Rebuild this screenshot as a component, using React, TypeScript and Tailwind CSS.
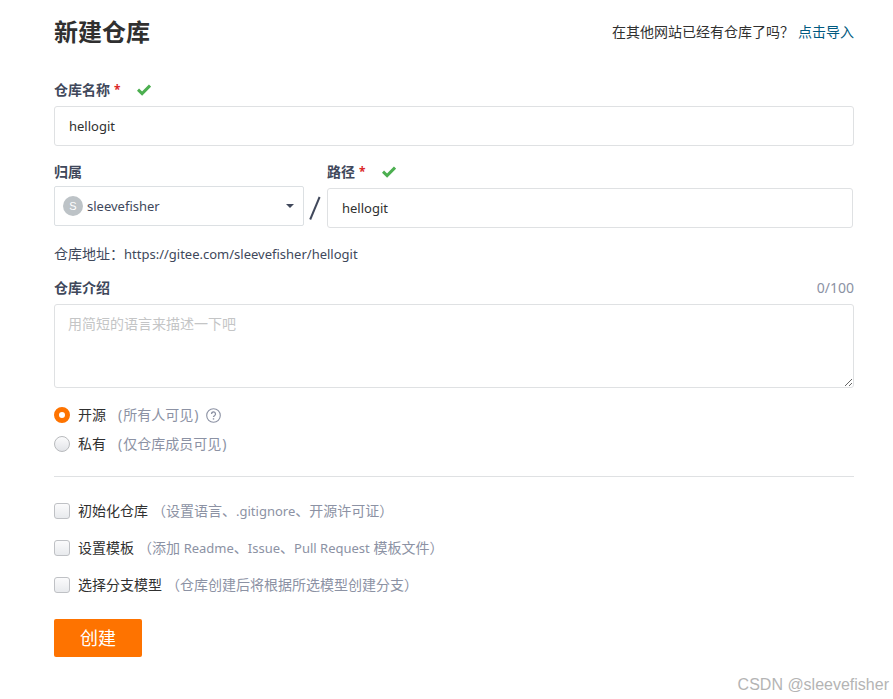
import React, { useState } from "react";

const Latin = ({ children }: { children: React.ReactNode }) => (
    <span className="text-[13px]">{children}</span>
);

const options = [
    { id: "init", title: "初始化仓库", hint: <>（设置语言、<Latin>.gitignore</Latin>、开源许可证）</> },
    { id: "template", title: "设置模板", hint: <>（添加 <Latin>Readme</Latin>、<Latin>Issue</Latin>、<Latin>Pull Request</Latin> 模板文件）</> },
    { id: "branch", title: "选择分支模型", hint: <>（仓库创建后将根据所选模型创建分支）</> },
];

const visibilities = [
    { id: "public", title: "开源", hint: "所有人可见", help: true },
    { id: "private", title: "私有", hint: "仅仓库成员可见", help: false },
];

const CheckMark = () => (
    <svg className="ml-4 h-3 w-[14px]" viewBox="0 0 14 12" aria-hidden="true">
        <path d="M1 5.6 5.1 9.6 13 1.6" fill="none" stroke="#4caf50" strokeWidth="3" />
    </svg>
);

const HelpIcon = () => (
    <svg className="ml-2 size-[15px]" viewBox="0 0 15 15" fill="none" stroke="#8c92a4" aria-hidden="true">
        <circle cx="7.5" cy="7.5" r="6.8" strokeWidth="1.1" />
        <path d="M5.5 6a2 2 0 1 1 3 1.7c-.7.4-1 .7-1 1.3" strokeWidth="1.3" />
        <path d="M7.5 10.2v1.4" strokeWidth="1.4" />
    </svg>
);

const Required = () => <span className="ml-1 text-xs leading-5 text-[#db2828]">*</span>;

const App = () => {
    const [name, setName] = useState("hellogit");
    const [path, setPath] = useState("hellogit");
    const [intro, setIntro] = useState("");
    const [visibility, setVisibility] = useState("public");

    return (
        <div className="relative min-h-screen bg-white pt-4 pr-[39px] pb-[42px] pl-[54px] font-['Noto_Sans','Noto_Sans_CJK_SC',sans-serif] text-sm leading-5 text-[#40485b]">
            <header className="flex items-center justify-between leading-8">
                <h1 className="text-2xl leading-8 font-bold text-[#303030]">新建仓库</h1>
                <p className="text-[#303030]">
                    在其他网站已经有仓库了吗？
                    <a href="#import" className="ml-1 text-[#005980]">点击导入</a>
                </p>
            </header>

            <form onSubmit={(e) => e.preventDefault()}>
                <div className="mt-8">
                    <label htmlFor="name" className="mb-1.5 flex items-center font-bold">
                        仓库名称<Required /><CheckMark />
                    </label>
                    <input
                        type="text"
                        id="name"
                        value={name}
                        onChange={(e) => setName(e.target.value)}
                        className="block h-10 w-full rounded-[3px] border border-[#dfe1e3] px-[14px] text-[13px] text-[#303030] outline-none"
                    />
                </div>

                <div className="mt-4 flex">
                    <div className="w-[250px] shrink-0">
                        <label htmlFor="owner" className="mb-1 block font-bold">归属</label>
                        <div className="relative">
                            <select id="owner" className="block h-10 w-full appearance-none rounded-[2px] border border-[#dce0e3] bg-white pr-8 pl-8 text-[13px] outline-none">
                                <option>sleevefisher</option>
                            </select>
                            <span className="pointer-events-none absolute top-[10px] left-[9px] flex size-5 items-center justify-center rounded-full bg-[#bdc3c7] font-['Liberation_Sans',sans-serif] text-[11px] text-white">S</span>
                            <svg className="pointer-events-none absolute top-[18px] right-[10px] h-1 w-2" viewBox="0 0 8 4" aria-hidden="true">
                                <path d="M0 0h8L4 4z" fill="#40485b" />
                            </svg>
                        </div>
                    </div>
                    <div className="flex w-[23px] shrink-0 items-end pb-2 pl-[5px]">
                        <svg className="h-6 w-3" viewBox="0 0 12 24" aria-hidden="true">
                            <path d="M1.2 23.5 10.6 1" stroke="#40485b" strokeWidth="2" />
                        </svg>
                    </div>
                    <div className="min-w-0 flex-1 pr-px">
                        <label htmlFor="path" className="mb-1.5 flex items-center font-bold">
                            路径<Required /><CheckMark />
                        </label>
                        <input
                            type="text"
                            id="path"
                            value={path}
                            onChange={(e) => setPath(e.target.value)}
                            className="block h-10 w-full rounded-[3px] border border-[#dfe1e3] px-[14px] text-[13px] text-[#303030] outline-none"
                        />
                    </div>
                </div>

                <p className="mt-4">仓库地址：<Latin>https://gitee.com/sleevefisher/{path}</Latin></p>

                <div className="mt-[14px]">
                    <div className="mb-1.5 flex justify-between">
                        <label htmlFor="intro" className="font-bold">仓库介绍</label>
                        <span className="text-[#8c92a4]">{intro.length}/100</span>
                    </div>
                    <textarea
                        id="intro"
                        maxLength={100}
                        value={intro}
                        onChange={(e) => setIntro(e.target.value)}
                        placeholder="用简短的语言来描述一下吧"
                        className="block h-[84px] w-full resize-y rounded-[3px] border border-[#dfe1e3] px-[13px] py-[9px] outline-none placeholder:text-[#c4c5c6]"
                    />
                </div>

                <div className="mt-[17px] flex flex-col gap-[9px]">
                    {visibilities.map((item) => (
                        <div key={item.id} className="flex items-center">
                            <input
                                type="radio"
                                id={item.id}
                                name="visibility"
                                checked={visibility === item.id}
                                onChange={() => setVisibility(item.id)}
                                className="size-4 appearance-none rounded-full border border-[#b8babd] bg-linear-to-b from-[#fbfbfc] to-[#e2e4e8] checked:border-[5px] checked:border-[#fe7300] checked:bg-white checked:bg-none"
                            />
                            <label htmlFor={item.id} className="ml-2 flex text-[#303030]">
                                {item.title}
                                <span className="ml-3 flex gap-px text-[#8c92a4]">
                                    <span>(</span>{item.hint}<span>)</span>
                                </span>
                            </label>
                            {item.help && <HelpIcon />}
                        </div>
                    ))}
                </div>

                <hr className="mt-[22px] border-[#dfe1e3]" />

                <div className="mt-6 flex flex-col gap-[17px]">
                    {options.map((item) => (
                        <div key={item.id} className="flex items-center">
                            <input
                                type="checkbox"
                                id={item.id}
                                className="size-4 appearance-none rounded-[3px] border border-[#bfc1c5] bg-linear-to-b from-[#fbfbfc] to-[#e8eaed] checked:bg-[#fe7300] checked:bg-none"
                            />
                            <label htmlFor={item.id} className="ml-2 flex text-[#303030]">
                                {item.title}
                                <span className="ml-1 text-[#8c92a4]">{item.hint}</span>
                            </label>
                        </div>
                    ))}
                </div>

                <button type="submit" className="mt-6 block h-[38px] w-[88px] rounded-[2px] bg-[#fe7300] text-lg text-white">
                    创建
                </button>
            </form>

            <span className="absolute right-1 bottom-1 font-['Liberation_Sans',sans-serif] text-base leading-5 text-[#b4b4b4]">CSDN @sleevefisher</span>
        </div>
    );
};

export default App;
